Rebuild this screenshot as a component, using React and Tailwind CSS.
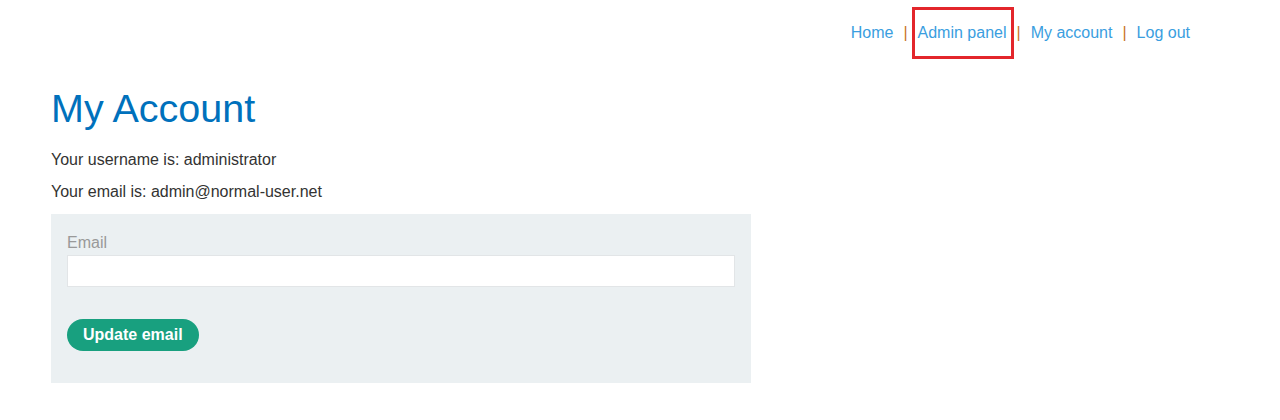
export default function App() {
    const links = ["Home", "Admin panel", "My account", "Log out"];

    return (
        <div className="min-h-[420px] bg-white text-[#333332]" style={{ fontFamily: '"Liberation Sans", Arial, sans-serif' }}>
            {/* top links */}
            <div className="flex justify-end pr-[90px] pt-[23px] text-[16px] leading-[20px]">
                {links.map((label, i) => (
                    <div key={label} className="flex items-center">
                        {i > 0 && <span className="mx-[10px] text-[#c9731d]">|</span>}
                        {label === "Admin panel" ? (
                            <span className="relative text-[#3a9ee0]">
                                {label}
                                <span className="absolute left-[-6px] right-[-8px] top-[-16px] bottom-[-16px] border-[3px] border-[#e3262b]"></span>
                            </span>
                        ) : (
                            <span className="text-[#3a9ee0]">{label}</span>
                        )}
                    </div>
                ))}
            </div>

            <div className="pl-[51px] pt-[42px]">
                <h1 className="text-[39.5px] leading-[46px] text-[#0071bc]">My Account</h1>
                <p className="mt-[19px] text-[16px] leading-[20px]">Your username is: administrator</p>
                <p className="mt-[12px] text-[16px] leading-[20px]">Your email is: admin@normal-user.net</p>

                <form className="mt-[12px] w-[700px] bg-[#ebf0f2] px-[16px] pt-[20px] pb-[32px]">
                    <label className="block text-[16px] leading-[18px] text-[#999999]">Email</label>
                    <input className="mt-[3px] block h-[32px] w-full border border-[#e2e5e7] bg-white" />
                    <button
                        type="button"
                        className="mt-[32px] h-[32px] rounded-full bg-[#18a07f] px-[16px] text-[16px] font-bold text-white"
                    >
                        Update email
                    </button>
                </form>
            </div>
        </div>
    );
}
